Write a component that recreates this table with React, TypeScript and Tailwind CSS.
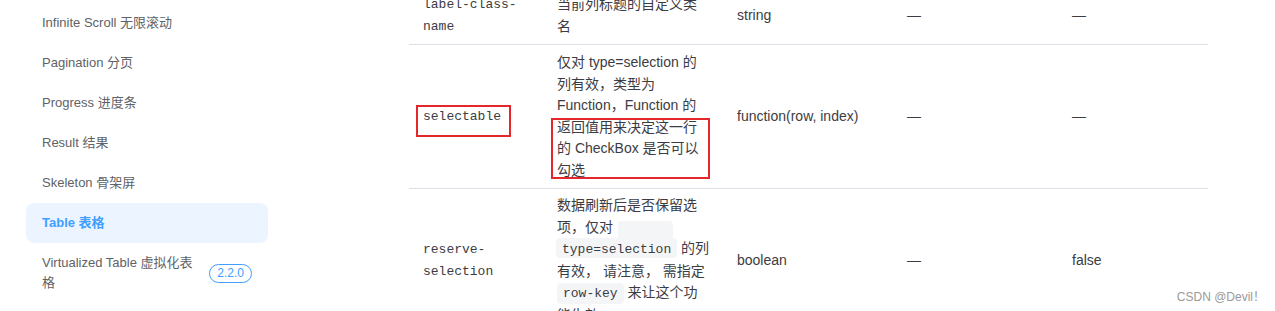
import type React from "react"

const sans = { fontFamily: '"Liberation Sans", Arial, "Noto Sans CJK SC", sans-serif' }

interface MenuItem {
  id: number
  label: string
  active?: boolean
  badge?: string
}

const menu: MenuItem[] = [
  { id: 1, label: "Infinite Scroll 无限滚动" },
  { id: 2, label: "Pagination 分页" },
  { id: 3, label: "Progress 进度条" },
  { id: 4, label: "Result 结果" },
  { id: 5, label: "Skeleton 骨架屏" },
  { id: 6, label: "Table 表格", active: true },
  { id: 7, label: "Virtualized Table 虚拟化表格", badge: "2.2.0" },
]

function Code({ children, bg }: { children: React.ReactNode; bg?: boolean }) {
  return (
    <span
      className={`font-['Liberation_Mono','DejaVu_Sans_Mono',monospace] text-[13px] ${
        bg ? "bg-[#f4f5f7] rounded-[4px] px-[6px] py-[3px]" : ""
      }`}
    >
      {children}
    </span>
  )
}

function Cell({ children, className = "" }: { children: React.ReactNode; className?: string }) {
  return <div className={`flex items-center py-[7px] ${className}`}>{children}</div>
}

export default function App() {
  return (
    <div className="relative h-[311px] w-[1275px] overflow-hidden bg-white" style={sans}>
      <div className="flex">
        {/* sidebar */}
        <aside className="w-[290px] shrink-0 pl-[26px] pt-[3px]">
          {menu.map((item) =>
            item.active ? (
              <div
                key={item.id}
                className="flex h-[40px] w-[242px] items-center rounded-[8px] bg-[#ecf5ff] px-[16px] text-[13px] font-bold text-[#409eff]"
              >
                {item.label}
              </div>
            ) : item.badge ? (
              <div key={item.id} className="flex w-[242px] items-center px-[16px] py-[10px] text-[13px] leading-[20px] text-[#606266]">
                <span className="w-[158px]">{item.label}</span>
                <span className="ml-auto rounded-full border border-[#409eff] px-[7px] text-[12px] leading-[17px] text-[#409eff]">
                  {item.badge}
                </span>
              </div>
            ) : (
              <div key={item.id} className="flex h-[40px] w-[242px] items-center px-[16px] text-[13px] text-[#606266]">
                {item.label}
              </div>
            ),
          )}
        </aside>

        {/* attributes table */}
        <main className="ml-[119px] mt-[-13px] w-[799px] text-[14px] leading-[21.5px] text-[#3c3c43]">
          <div className="grid grid-cols-[132px_180px_170px_165px_152px] border-b border-[#dcdfe6]">
            <Cell className="pl-[14px]">
              <Code>
                label-class-
                <br />
                name
              </Code>
            </Cell>
            <Cell className="px-[16px]">
              当前列标题的自定义类
              <br />名
            </Cell>
            <Cell className="px-[16px]">string</Cell>
            <Cell className="px-[16px]">—</Cell>
            <Cell className="px-[16px]">—</Cell>
          </div>

          <div className="grid grid-cols-[132px_180px_170px_165px_152px] border-b border-[#dcdfe6]">
            <Cell className="pl-[14px]">
              <span className="relative">
                <Code>selectable</Code>
                {/* annotation box */}
                <span className="absolute -left-[7px] -right-[10px] top-0 h-[32px] border-2 border-[#e5262b]" />
              </span>
            </Cell>
            <div className="flex flex-col justify-center px-[16px] py-[7px]">
              <div>仅对 type=selection 的</div>
              <div>列有效，类型为</div>
              <div>Function，Function 的</div>
              <div className="relative">
                <div>返回值用来决定这一行</div>
                <div>的 CheckBox 是否可以</div>
                <div>勾选</div>
                {/* annotation box */}
                <span className="absolute -left-[6px] -right-[5px] top-[1px] h-[61px] border-2 border-[#e5262b]" />
              </div>
            </div>
            <Cell className="px-[16px]">function(row, index)</Cell>
            <Cell className="px-[16px]">—</Cell>
            <Cell className="px-[16px]">—</Cell>
          </div>

          <div className="grid grid-cols-[132px_180px_170px_165px_152px]">
            <Cell className="pl-[14px]">
              <Code>
                reserve-
                <br />
                selection
              </Code>
            </Cell>
            <div className="flex flex-col px-[16px] py-[6px]">
              <div>数据刷新后是否保留选</div>
              <div className="flex items-end">
                项，仅对
                <span className="ml-[5px] inline-block h-[17px] w-[55px] rounded-t-[4px] bg-[#f4f5f7]" />
              </div>
              <div className="whitespace-nowrap">
                <span className="-ml-[1px] rounded-[4px] bg-[#f4f5f7] px-[6px] py-[2px]">
                  <Code>type=selection</Code>
                </span>{" "}
                的列
              </div>
              <div>有效， 请注意， 需指定</div>
              <div className="whitespace-nowrap">
                <Code bg>row-key</Code> 来让这个功
              </div>
              <div>能生效</div>
            </div>
            <Cell className="px-[16px]">boolean</Cell>
            <Cell className="px-[16px]">—</Cell>
            <Cell className="px-[16px]">false</Cell>
          </div>
        </main>
      </div>

      {/* watermark */}
      <div className="absolute bottom-[5px] right-[10px] text-[12px] text-[#9a9a9a]">CSDN @Devil！</div>
    </div>
  )
}
